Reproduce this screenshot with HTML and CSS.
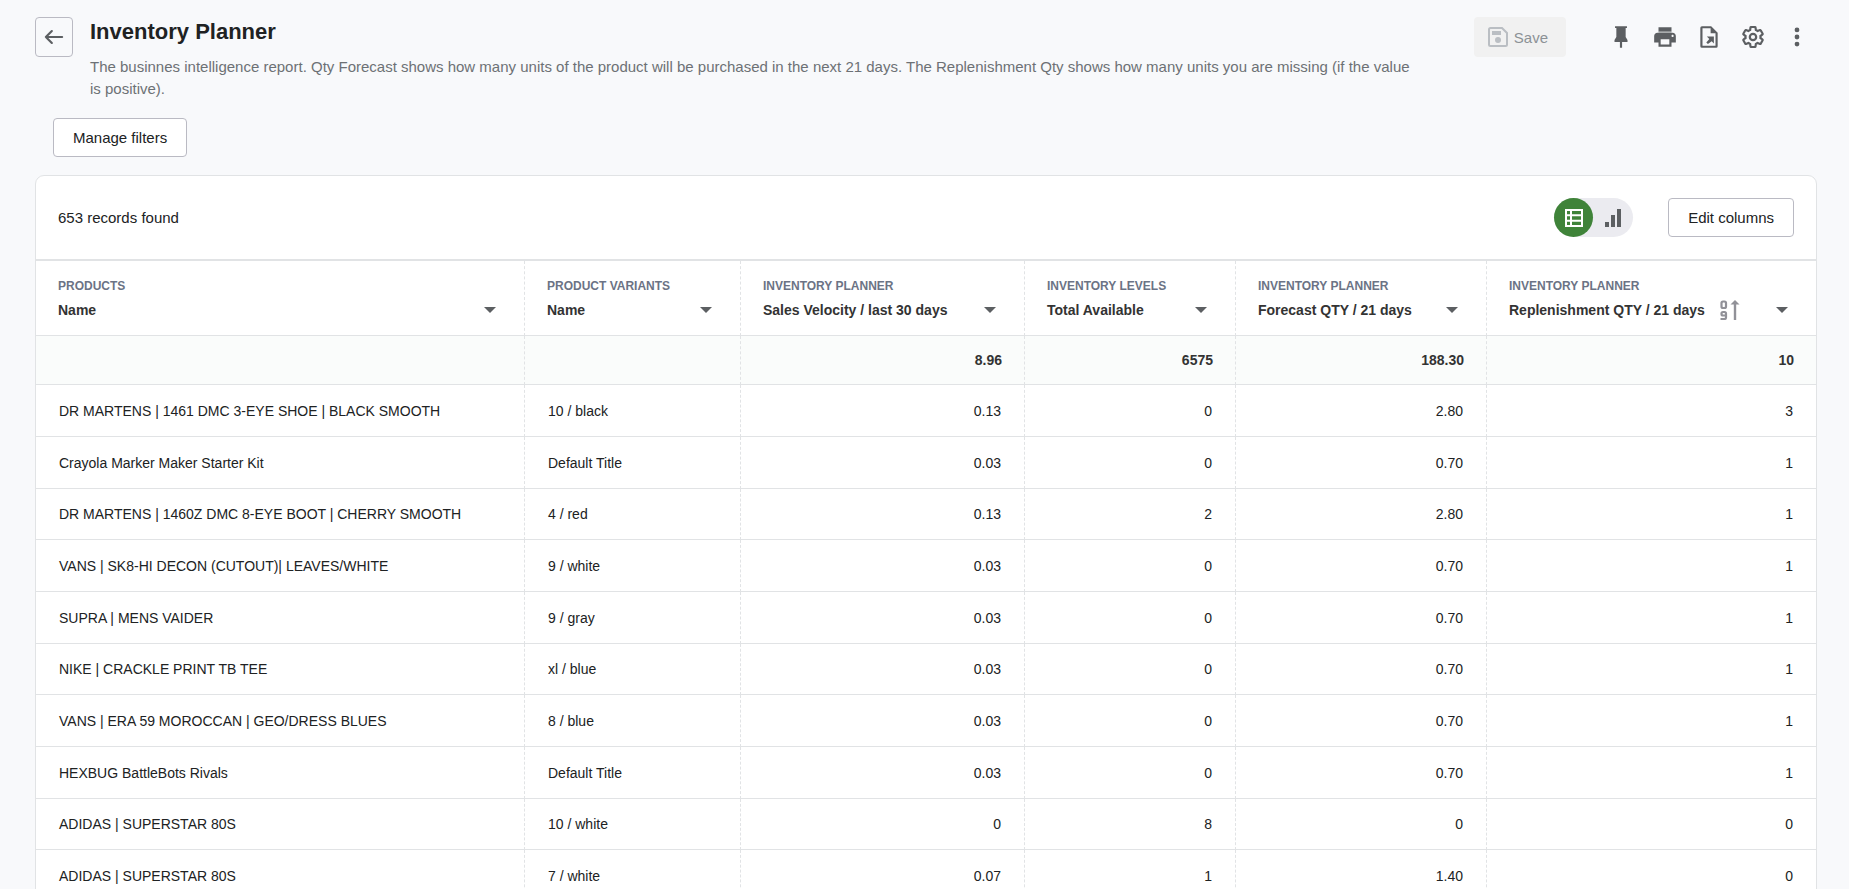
FILE: index.html
```
<!DOCTYPE html>
<html lang="en">
<head>
    <meta charset="UTF-8">
    <meta name="viewport" content="width=device-width, initial-scale=1.0">
    <title>Inventory Planner</title>
    <link rel="stylesheet" href="styles.css">
</head>
<body>
<header class="page-header">
    <button class="btn back" aria-label="Back">
        <svg class="icon" viewBox="0 0 24 24"><path d="M19.500 12H4.500M10 6.500L4.500 12l5.500 5.500" fill="none" stroke="currentColor" stroke-width="2" stroke-linecap="round" stroke-linejoin="round"/></svg>
    </button>
    <div class="heading">
        <h1>Inventory Planner</h1>
        <p>The businnes intelligence report. Qty Forecast shows how many units of the product will be purchased in the next 21 days. The Replenishment Qty shows how many units you are missing (if the value is positive).</p>
    </div>
    <button class="save" disabled>
        <svg class="icon-save" viewBox="0 0 20 20"><path d="M1 2.500Q1 1 2.500 1H14l5 5v11.500Q19 19 17.500 19h-15Q1 19 1 17.500z" fill="none" stroke="currentColor" stroke-width="2"/><path d="M4 4h9v4H4z" fill="currentColor"/><circle cx="10" cy="13" r="3" fill="currentColor"/></svg>
        Save
    </button>
    <div class="actions">
        <button aria-label="Pin"><svg class="icon" viewBox="0 0 24 24"><path d="M6.500 2v1.800h1.200v8.200L6 14.700v1.800h5V22h2v-5.500h5v-1.800L16.300 12V3.800h1.200V2z"/></svg></button>
        <button aria-label="Print"><svg class="icon" viewBox="0 0 24 24"><path d="M19 8H5c-1.660 0-3 1.340-3 3v6h4v4h12v-4h4v-6c0-1.660-1.340-3-3-3zm-3 11H8v-5h8v5zm3-7c-.55 0-1-.45-1-1s.45-1 1-1 1 .45 1 1-.45 1-1 1z"/><path d="M18 3H6v4h12z"/><path d="M6 7h12v1H6z" opacity=".5"/></svg></button>
        <button aria-label="Export"><svg class="icon" viewBox="0 0 24 24"><path d="M5.500 2Q4 2 4 3.500v17Q4 22 5.500 22h13q1.500 0 1.500-1.500V8l-6-6zM6 4h7.500v4.500H18V20H6z" fill-rule="evenodd"/><path d="M10 11.500h6.500V18l-2-2L11 18.500 9.500 17l2.800-3.200z"/></svg></button>
        <button aria-label="Settings"><svg class="icon" viewBox="-1 -1 26 26"><path d="M19.430 12.980c.04-.32.07-.64.07-.98s-.03-.66-.07-.98l2.110-1.650c.19-.15.24-.42.12-.64l-2-3.460c-.12-.22-.39-.3-.61-.22l-2.490 1c-.52-.4-1.080-.73-1.690-.98l-.38-2.650C14.460 2.180 14.250 2 14 2h-4c-.25 0-.46.18-.49.42l-.38 2.650c-.61.25-1.170.59-1.690.98l-2.490-1c-.23-.09-.49 0-.61.22l-2 3.460c-.13.22-.07.49.12.64l2.110 1.650c-.04.32-.07.65-.07.98s.03.66.07.98l-2.110 1.650c-.19.15-.24.42-.12.64l2 3.460c.12.22.39.3.61.22l2.490-1c.52.4 1.080.73 1.690.98l.38 2.650c.03.24.24.42.49.42h4c.25 0 .46-.18.49-.42l.38-2.650c.61-.25 1.170-.59 1.690-.98l2.490 1c.23.09.49 0 .61-.22l2-3.460c.12-.22.07-.49-.12-.64z" fill="none" stroke="currentColor" stroke-width="2.200"/><circle cx="12" cy="12" r="3.200" fill="none" stroke="currentColor" stroke-width="2.200"/></svg></button>
        <button aria-label="More"><svg class="icon" viewBox="0 0 24 24"><circle cx="12" cy="5.500" r="2.200"/><circle cx="12" cy="12" r="2.200"/><circle cx="12" cy="18.500" r="2.200"/></svg></button>
    </div>
</header>

<div class="filters">
    <button class="btn">Manage filters</button>
</div>

<main class="card">
    <div class="toolbar">
        <span class="records">653 records found</span>
        <div class="switch">
            <button class="active" aria-label="Table view"><svg viewBox="0 0 18 18"><path d="M1 1h16v16H1zM6 1v16M1 6.300h16M1 11.700h16" fill="none" stroke="currentColor" stroke-width="2"/></svg></button>
            <button aria-label="Chart view"><svg viewBox="0 0 18 18"><path d="M1 13h4v5H1zM7 6h4v12H7zM13 0h4v18h-4z"/></svg></button>
        </div>
        <button class="btn">Edit columns</button>
    </div>
    <table>
        <colgroup>
            <col>
            <col class="col-variant">
            <col class="col-velocity">
            <col class="col-available">
            <col class="col-forecast">
            <col class="col-replenish">
        </colgroup>
        <thead>
            <tr>
                <th><small>PRODUCTS</small><div class="title">Name<button class="caret" aria-label="Column menu"></button></div></th>
                <th><small>PRODUCT VARIANTS</small><div class="title">Name<button class="caret" aria-label="Column menu"></button></div></th>
                <th><small>INVENTORY PLANNER</small><div class="title">Sales Velocity / last 30 days<button class="caret" aria-label="Column menu"></button></div></th>
                <th><small>INVENTORY LEVELS</small><div class="title">Total Available<button class="caret" aria-label="Column menu"></button></div></th>
                <th><small>INVENTORY PLANNER</small><div class="title">Forecast QTY / 21 days<button class="caret" aria-label="Column menu"></button></div></th>
                <th><small>INVENTORY PLANNER</small><div class="title">Replenishment QTY / 21 days<svg class="sort" viewBox="0 0 20 20"><rect x="1.500" y="1.500" width="4.500" height="6.500" rx="1.500" fill="none" stroke="currentColor" stroke-width="2.200"/><path d="M6 15.500H3q-1.500 0-1.500-1.500v-.5Q1.500 12 3 12h1.500Q6 12 6 13.500v4q0 1.500-1.500 1.500H.5" fill="none" stroke="currentColor" stroke-width="2.200"/><path d="M15 20V2" fill="none" stroke="currentColor" stroke-width="2.400"/><path d="M15 0l4.500 4.500h-9z"/></svg><button class="caret" aria-label="Column menu"></button></div></th>
            </tr>
            <tr class="totals"><td></td><td></td><td>8.96</td><td>6575</td><td>188.30</td><td>10</td></tr>
        </thead>
        <tbody>
            <tr><td>DR MARTENS | 1461 DMC 3-EYE SHOE | BLACK SMOOTH</td><td>10 / black</td><td>0.13</td><td>0</td><td>2.80</td><td>3</td></tr>
            <tr><td>Crayola Marker Maker Starter Kit</td><td>Default Title</td><td>0.03</td><td>0</td><td>0.70</td><td>1</td></tr>
            <tr><td>DR MARTENS | 1460Z DMC 8-EYE BOOT | CHERRY SMOOTH</td><td>4 / red</td><td>0.13</td><td>2</td><td>2.80</td><td>1</td></tr>
            <tr><td>VANS | SK8-HI DECON (CUTOUT)| LEAVES/WHITE</td><td>9 / white</td><td>0.03</td><td>0</td><td>0.70</td><td>1</td></tr>
            <tr><td>SUPRA | MENS VAIDER</td><td>9 / gray</td><td>0.03</td><td>0</td><td>0.70</td><td>1</td></tr>
            <tr><td>NIKE | CRACKLE PRINT TB TEE</td><td>xl / blue</td><td>0.03</td><td>0</td><td>0.70</td><td>1</td></tr>
            <tr><td>VANS | ERA 59 MOROCCAN | GEO/DRESS BLUES</td><td>8 / blue</td><td>0.03</td><td>0</td><td>0.70</td><td>1</td></tr>
            <tr><td>HEXBUG BattleBots Rivals</td><td>Default Title</td><td>0.03</td><td>0</td><td>0.70</td><td>1</td></tr>
            <tr><td>ADIDAS | SUPERSTAR 80S</td><td>10 / white</td><td>0</td><td>8</td><td>0</td><td>0</td></tr>
            <tr><td>ADIDAS | SUPERSTAR 80S</td><td>7 / white</td><td>0.07</td><td>1</td><td>1.40</td><td>0</td></tr>
        </tbody>
    </table>
</main>
</body>
</html>
```
FILE: styles.css
```
* { box-sizing: border-box; }
html { height: 100%; overflow: hidden; }
body { margin: 0; padding: 17px 32px 0 35px; background-color: #f8f9fb; color: #202223; font-family: "Liberation Sans", Arial, sans-serif; font-size: 15px; }
button { font: inherit; color: inherit; cursor: pointer; }
svg { display: block; fill: currentColor; }
.icon { width: 26px; height: 26px; }

.btn { height: 39px; padding: 0 19px; border: 1px solid #babac3; border-radius: 4px; background-color: #fff; white-space: nowrap; }
.page-header { display: flex; align-items: flex-start; }
.back { width: 38px; height: 40px; padding: 0 5px; background: transparent; color: #5c5f62; }
.heading { flex: 1; padding: 0 60px 0 17px; }
h1 { margin: 0; font-size: 22px; line-height: 29px; }
.heading p { margin: 10px 0 0; color: #6d7175; line-height: 22px; }
.save { display: flex; align-items: center; gap: 6px; height: 40px; padding: 0 18px 0 14px; border: none; border-radius: 4px; background-color: #f1f1f1; color: #8c9196; }
.icon-save { width: 20px; height: 20px; color: #babec3; }
.actions { display: flex; gap: 18px; margin: 7px 7px 0 42px; color: #5c5f62; }
.actions button { padding: 0; border: none; background: none; }

.filters { padding: 18px; }

.card { border: 1px solid #e1e3e5; border-radius: 9px 9px 0 0; background-color: #fff; }
.toolbar { display: flex; align-items: center; height: 83px; padding: 0 22px; }
.records { flex: 1; }
.switch { display: flex; margin-right: 35px; border-radius: 20px; background-color: #ebebf0; color: #5c5f62; }
.switch button { display: flex; align-items: center; justify-content: center; width: 40px; height: 39px; padding: 0; border: none; border-radius: 50%; background: none; }
.switch .active { width: 39px; background-color: #3f8339; color: #fff; }
.switch svg { width: 18px; height: 18px; }

table { width: 100%; table-layout: fixed; border-collapse: separate; border-spacing: 0; border-top: 2px solid #e1e3e5; font-size: 14px; }
.col-variant { width: 216px; }
.col-velocity { width: 284px; }
.col-available { width: 211px; }
.col-forecast { width: 251px; }
.col-replenish { width: 329px; }
th, td { border-bottom: 1px solid #e1e3e5; border-right: 1px dashed #e1e3e5; white-space: nowrap; text-align: left; }
th:last-child, td:last-child { border-right: none; }
th { height: 75px; padding: 6px 22px 0; }
small { display: block; color: #6b7385; font-size: 12px; line-height: 18px; }
.title { display: flex; align-items: center; height: 30px; color: #333; }
.caret { width: 12px; height: 6px; margin: 0 6px 0 auto; padding: 0; border: none; background-color: #5c5f62; clip-path: polygon(0 0, 100% 0, 50% 100%); }
.sort { width: 20px; height: 20px; margin-left: 15px; color: #919198; }
td { height: 52px; padding: 0 23px; }
tr:nth-child(3n) td { height: 51px; }
td:nth-child(n+3) { text-align: right; }
.totals td { height: 49px; padding: 0 22px; background-color: #fafcfb; color: #333; font-weight: bold; }
```
